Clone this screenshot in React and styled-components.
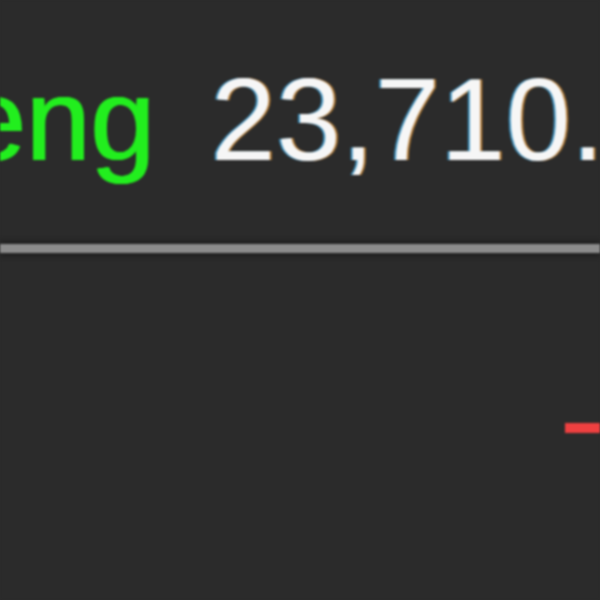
import React from 'react';
import styled, { createGlobalStyle } from 'styled-components';

const GlobalStyle = createGlobalStyle`
  html, body {
    margin: 0;
    padding: 0;
    background: #2b2b2b;
  }
`;

const Screen = styled.div`
  width: 600px;
  height: 600px;
  overflow: hidden;
  background: #2b2b2b;
  display: flex;
  flex-direction: column;
  filter: blur(1.2px);
`;

const Ticker = styled.div`
  display: flex;
  align-items: baseline;
  padding-top: 62px;
  font-family: "Liberation Sans", Arial, sans-serif;
  font-size: 116px;
  line-height: 1;
  white-space: nowrap;
`;

const Label = styled.div`
  flex: 0 0 155px;
  min-width: 0;
  display: flex;
  justify-content: flex-end;
  color: #22ee1e;
  text-shadow: 1px 0 #22ee1e, -1px 0 #22ee1e;
`;

const Value = styled.div`
  margin-left: 56px;
  color: #f6f6f6;
  letter-spacing: 1px;
  text-shadow: -2px 0 rgba(70, 190, 255, 0.7), 2px 0 rgba(240, 160, 60, 0.7);
`;

const Divider = styled.div`
  margin-top: 66px;
  height: 9px;
  background: #8c8c8c;
  box-shadow: 0 -4px 4px #222, 0 4px 4px #222;
`;

const Chart = styled.svg`
  display: block;
  width: 600px;
  height: 340px;
`;

export default function App() {
  return (
    <>
      <GlobalStyle />
      <Screen>
        <Ticker>
          <Label><span>Hang Seng</span></Label>
          <Value>23,710.00</Value>
        </Ticker>
        <Divider />
        <Chart viewBox="0 0 600 340">
          <line x1="565" y1="175" x2="600" y2="175" stroke="#ee4040" strokeWidth="10" />
        </Chart>
      </Screen>
    </>
  );
}
